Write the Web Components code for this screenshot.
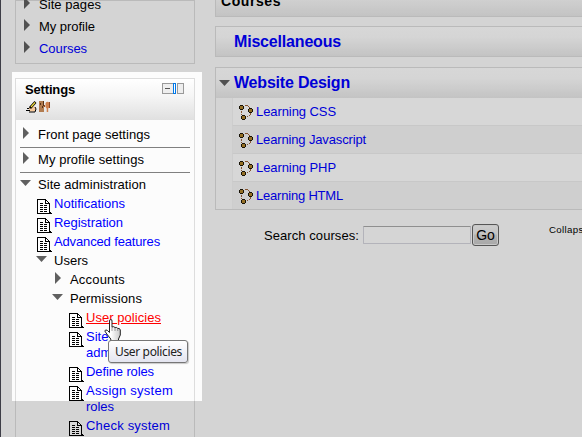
<!DOCTYPE html>
<html lang="en"><head><meta charset="utf-8"><title>Courses</title>
<style>html,body{margin:0;width:582px;height:437px;overflow:hidden;background:#fcfcfc}</style></head><body>
<course-page></course-page>
<script>
const define=(name,html,init)=>customElements.define(name,class extends HTMLElement{
  constructor(){super();this.attachShadow({mode:'open'}).innerHTML=html}
  connectedCallback(){if(init)init(this,this.shadowRoot)}
});

/* Text run whose tracking is set so that it fills the width in the w attribute. */
define('fit-text',`<style>:host{display:inline-block;white-space:nowrap}span{display:inline-block;white-space:nowrap;text-decoration:var(--line,none)}</style><span><slot></slot></span>`,(el,r)=>{
  const s=r.querySelector('span'),w=+el.getAttribute('w');
  if(w){const n=el.textContent.length;s.style.letterSpacing=((w-s.getBoundingClientRect().width)/n)+'px'}
});

define('page-icon',`<style>:host{display:block;width:15px;height:16px}svg{display:block}</style>
<svg width="15" height="16" shape-rendering="crispEdges"><path fill="#fff" d="M1 1h8l3 4v9H1z"/><path fill="#000" d="M0 0h9v1H0zM0 0h1v15H0zM0 14h15v1H0zM12 4h1v10h-1zM9 1h1v1H9zM10 2h1v1h-1zM11 3h1v1h-1zM8 1h1v4H8zM8 4h4v1H8zM13 13h1v1h-1zM3 4h3v1H3zM3 6h3v1H3zM7 6h3v1H7zM3 8h3v1H3zM7 8h3v1H7zM3 10h3v1H3zM7 10h3v1H7zM3 12h3v1H3zM7 12h3v1H7z"/></svg>`);

define('tree-arrow',`<style>:host{display:block;width:11px;height:12px}svg{display:block}.o{display:none}:host([open]) .o{display:block}:host([open]) .c{display:none}</style>
<svg class="c" width="11" height="12"><path fill="#606060" d="M3 0l6 6-6 6z"/></svg><svg class="o" width="11" height="12"><path fill="#606060" d="M0 3h11L5.5 9z"/></svg>`);

define('course-icon',`<style>:host{display:block;width:15px;height:16px}svg{display:block}</style>
<svg width="15" height="16" shape-rendering="crispEdges"><path fill="#a0673c" d="M6 1h3v1H6zM9 2h1v1H9zM10 3h1v1h-1zM2 7h1v2H2zM2 10h1v1H2zM11 9h1v2h-1zM10 11h1v1h-1zM8 12h1v1H8z"/>
<g id="d"><path fill="#1c1608" d="M1 1h3v1H1zM0 2h1v3H0zM4 2h1v3H4zM1 5h3v1H1zM10 4h3v1h-3zM9 5h1v3H9zM13 5h1v3h-1zM10 8h3v1h-3zM3 11h3v1H3zM2 12h1v3H2zM6 12h1v3H6zM3 15h3v1H3z"/><path fill="#b0842c" d="M1 2h3v3H1zM10 5h3v3h-3zM3 12h3v3H3z"/></g></svg>`);

define('tree-row',`<style>
:host{display:grid;grid-template-columns:17px 1fr;align-content:start;line-height:16px;height:19px;color:#000}
.i{display:block;padding-top:3px;height:16px}.t{display:block}
:host([link]) .t{color:#00f}:host([hot]) .t{color:#f00;--line:underline}
:host([kind=arrow]){margin-left:-1px;grid-template-columns:18px 1fr}:host([kind=arrow]) .i{padding-top:0}
:host([kind=root]){grid-template-columns:18px 1fr}:host([kind=root]) .i{padding-top:0}
:host([tall]){height:35px}
</style><span class="i"><slot name="icon"></slot></span><span class="t"><slot></slot></span>`);

define('side-block',`<style>
:host{display:block;box-sizing:border-box;width:180px;border:1px solid #ddd;background:#fcfcfc}
header{display:none}:host([titled]) header{display:block;box-sizing:border-box;height:41px;padding:3px 10px 0 9px;background:linear-gradient(#fff,#f6f6f6 40%,#e0e0e0)}
.h{display:flex;justify-content:space-between;align-items:flex-start;height:19px;font-weight:bold;line-height:16px}
svg{display:block}
</style><header><div class="h"><slot name="title"></slot><svg width="22" height="11" shape-rendering="crispEdges" style="margin-top:1px"><path fill="#eee" d="M0 0h11v11H0zM15 0h7v11h-7z"/><path fill="#999" d="M0 0h11v1H0zM0 10h11v1H0zM0 0h1v11H0zM15 0h7v1h-7zM15 10h7v1h-7zM15 0h1v11h-1zM21 0h1v11h-1z"/><path fill="#555" d="M3 5h5v1H3z"/><path fill="#0078e8" d="M11 0h3v11h-3z"/><path fill="#fff" d="M12 1h1v9h-1z"/></svg></div>
<svg width="26" height="12" style="margin-left:1px"><path fill="#f6c89a" d="M3 7l4-2 2 1 1 3-2 1.500H3z"/><path fill="none" stroke="#000" d="M0 9.500h4M1 7.500h2l2-2M3 11h6l1-3-1-2"/><path stroke="#000" stroke-width="2.600" d="M4 7l5.500-6"/><path stroke="#f2dc3a" stroke-width="1.200" d="M5 6l4-4.500"/><path fill="#b27c50" d="M13 0h5v11h-5z"/><path fill="#593216" d="M14 2h1v2h-1zM16 5h1v2h-1zM17 0h1v5h-1z"/><path fill="#d0814e" d="M19.500 2q2-2.500 4 0v4l-1.300 1.500V11h-1.500V7.500L19.500 6z"/><path fill="#8d4a26" d="M23 1h1v6h-1zM18 4h1v2h-1z"/></svg></header><slot></slot>`);

define('course-row',`<style>:host{display:flex;align-items:center;box-sizing:border-box;height:28px;margin-left:16px;padding-left:6px;gap:2px;border-bottom:1px solid #eee;border-left:1px solid #f4f4f4;color:#00f;background:#fff}:host([alt]){background:#f6f6f6}:host(:last-child){height:27px;border-bottom:0}</style><course-icon></course-icon><slot></slot>`);

define('title-bar',`<style>:host{display:flex;align-items:center;box-sizing:border-box;border:1px solid #ddd;font-weight:bold;color:#00f;background:linear-gradient(#fff,#fdfdfd 35%,#e8e8e8)}</style><slot></slot>`);

define('search-form',`<style>:host{display:flex;align-items:center;height:24px;color:#000}
i{box-sizing:border-box;width:108px;height:18px;margin:0 1px 0 4px;border:1px solid #d5d5dd;border-top-color:#aaa;border-radius:1px;background:#fdfdfd}
button{box-sizing:border-box;width:27px;height:22px;padding:0;border:1px solid #666;border-radius:3px;font:14px "Liberation Sans",Arial,sans-serif;color:#000;background:linear-gradient(#f4f4f4,#e8e8e8 45%,#d4d4d4 50%,#c8c8c8);box-shadow:inset 0 0 0 1px #eee}
small{font-size:9.7px;margin:-12px 0 0 50px;white-space:nowrap}</style><fit-text w="95">Search courses:</fit-text><i></i><button>Go</button><small><fit-text w="54">Collapse all</fit-text></small>`);

define('hand-pointer',`<style>:host{position:absolute;left:104px;top:319px}svg{display:block}</style>
<svg width="18" height="24"><defs><linearGradient id="g"><stop offset=".4" stop-color="#fff"/><stop offset="1" stop-color="#c9c9c9"/></linearGradient></defs><path fill="url(#g)" stroke="#222" stroke-linejoin="round" d="M5.500 2q0-1.500 1.300-1.500T8 2v6q2-1 3 .6 2-.6 2.700.8 2.300-.4 2.600 1.600v5l-1.800 4v2.500H6.800V20l-4-5-2-3q.5-2 2.700-.5l2 2z"/><path stroke="#777" stroke-width=".7" d="M8 8v4M11 8.500V12M13.700 9.500V12"/></svg>`);

define('tool-tip',`<style>:host{position:absolute;left:108px;top:340px;box-sizing:border-box;width:80px;height:23px;border:1px solid #767676;border-radius:3px;background:linear-gradient(#fff,#e4e5f0);box-shadow:1px 1px 1px #0003;padding-left:6px;font:12px/22px "Noto Sans",sans-serif;color:#222}</style><slot></slot>`);

/* Dims everything around the highlighted settings block. */
define('spot-light',`<style>:host{position:absolute;left:12px;top:72px;width:190px;height:329px;box-shadow:0 0 0 600px rgba(0,0,0,.157)}</style>`);

const ic='<page-icon slot="icon"></page-icon>',ar='<tree-arrow slot="icon"></tree-arrow>',op='<tree-arrow slot="icon" open></tree-arrow>';
const T=(w,t)=>`<fit-text w="${w}">${t}</fit-text>`;
const cr=(w,t,a='')=>`<course-row ${a}>${T(w,t)}</course-row>`;
define('course-page',`<style>
:host{display:block;position:relative;width:582px;height:437px;overflow:hidden;font:13px "Liberation Sans",Arial,sans-serif;background:#fcfcfc}
.cols{display:grid;grid-template-columns:180px 400px;gap:20px;box-sizing:border-box;height:437px;padding-left:14px;border-left:1px solid #4a4a55}
.left{display:flex;flex-direction:column;gap:14px;height:437px}
.nav{height:64px;flex:none}.nav tree-row{height:22px;margin-left:5px}
.nav .in{margin-top:-4px}
.set{height:380px;flex:none}
.root{margin:0 4px;height:25px;box-sizing:border-box;border-bottom:1px solid #808080}
.l1{padding-left:21px}.l2{padding-left:37px}.l3{padding-left:53px}
.right{width:400px}.c1{height:37px;margin-top:-20px;padding:5px 0 0 5px;color:#000}.c2{height:31px;margin-top:9px;padding-left:18px}.cat{margin-top:10px}.c3{height:31px;border-bottom:0;padding-left:3px;gap:4px}
.list{border:1px solid #ddd;border-top:0}
.big{font-size:16px}.mid{font-size:14px}
search-form{margin:13px 0 0 49px}
</style>
<div class="cols"><div class="left">
<side-block class="nav"><div class="in"><tree-row kind="root">${ar}${T(62,'Site pages')}</tree-row><tree-row kind="root">${ar}${T(56,'My profile')}</tree-row><tree-row kind="root" link>${ar}${T(48,'Courses')}</tree-row></div></side-block>
<side-block class="set" titled><span slot="title">${T(50,'Settings')}</span>
<div class="root" style="height:28px;padding-top:7px"><tree-row kind="root">${ar}${T(112,'Front page settings')}</tree-row></div>
<div class="root" style="padding-top:4px"><tree-row kind="root">${ar}${T(106,'My profile settings')}</tree-row></div>
<div class="root" style="height:23px;padding-top:4px;border:0"><tree-row kind="root">${op}${T(108,'Site administration')}</tree-row></div>
<div class="l1"><tree-row link>${ic}${T(71,'Notifications')}</tree-row><tree-row link>${ic}${T(69,'Registration')}</tree-row><tree-row link>${ic}${T(106,'Advanced features')}</tree-row><tree-row kind="arrow">${op}${T(34,'Users')}</tree-row></div>
<div class="l2"><tree-row kind="arrow">${ar}${T(55,'Accounts')}</tree-row><tree-row kind="arrow">${op}${T(72,'Permissions')}</tree-row></div>
<div class="l3"><tree-row link hot>${ic}${T(75,'User policies')}</tree-row><tree-row link tall>${ic}Site<br>administrators</tree-row><tree-row link>${ic}${T(68,'Define roles')}</tree-row><tree-row link tall>${ic}${T(87,'Assign system')}<br>${T(28,'roles')}</tree-row><tree-row link tall>${ic}${T(84,'Check system')}<br>permissions</tree-row></div>
</side-block></div>
<div class="right"><title-bar class="c1 mid">${T(60,'Courses')}</title-bar><title-bar class="c2 big">${T(107,'Miscellaneous')}</title-bar>
<div class="cat"><title-bar class="c3 big"><tree-arrow open></tree-arrow>${T(116,'Website Design')}</title-bar><div class="list">${cr(80,'Learning CSS')}${cr(110,'Learning Javascript','alt')}${cr(80,'Learning PHP')}${cr(87,'Learning HTML','alt')}</div></div>
<search-form></search-form></div></div>
<spot-light></spot-light><hand-pointer></hand-pointer><tool-tip>${T(67,'User policies')}</tool-tip>`);
</script></body></html>
